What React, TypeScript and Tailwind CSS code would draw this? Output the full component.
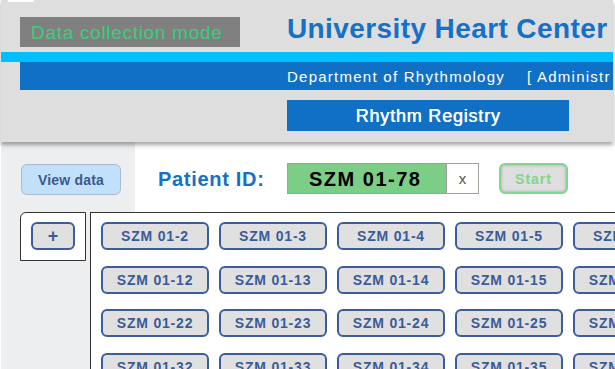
import React from "react";

const font = { fontFamily: '"Liberation Sans", Arial, sans-serif' };

function Tile({ label }: { label: string }) {
  return (
    <button className="h-[28px] w-[108px] shrink-0 rounded-[6px] border-2 border-[#3b5d9c] bg-[#e0e0e0] text-[14px] font-bold tracking-[0.8px] text-[#3b5b98] leading-none">
      {label}
    </button>
  );
}

export default function App() {
  const rows = [0, 1, 2, 3];
  const cols = [0, 1, 2, 3, 4, 5];
  return (
    <div className="relative h-[369px] w-[615px] overflow-hidden bg-white pl-px" style={font}>
      <div className="absolute left-[8px] top-0 z-10 h-[2px] w-[26px] bg-white" />
      {/* Header */}
      <div className="relative z-[5] h-[142px] w-[612px] bg-[#dedede] shadow-[0_3px_4px_rgba(0,0,0,0.35)]">
        <div className="flex h-[52px] items-start pt-[17px]">
          <div className="ml-[19px] flex h-[30px] w-[220px] items-center bg-[#808080] pl-[11px] text-[19px] tracking-[0.7px] text-[#33d17a] leading-none">
            Data collection mode
          </div>
          <div className="ml-[47px] mt-[-2px] whitespace-nowrap text-[28px] font-bold tracking-[0.4px] text-[#1470c8] leading-none">
            University Heart Center
          </div>
        </div>
        <div className="h-[10px] bg-[#00bfff]" />
        <div className="ml-[19px] flex h-[28px] items-center whitespace-nowrap bg-[#0f70c6] pl-[267px] text-[15px] tracking-[1.25px] text-white leading-none">
          <span>Department of Rhythmology</span>
          <span className="ml-[22px]">[ Administr</span>
        </div>
        <div className="ml-[286px] mt-[10px] flex h-[31px] w-[282px] items-center justify-center bg-[#0f70c6] text-[18px] tracking-[0.8px] text-white leading-none [text-shadow:0.5px_0_0_white]">
          Rhythm Registry
        </div>
      </div>

      {/* Top row */}
      <div className="flex h-[70px]">
        <div className="flex w-[134px] items-start bg-[#edeef0] pl-[20px] pt-[22px]">
          <button className="h-[31px] w-[100px] rounded-[6px] border border-[#a9bccf] bg-[#c3e0fb] text-[14px] font-bold tracking-[0.2px] text-[#3b5a8a] leading-none">
            View data
          </button>
        </div>
        <div className="flex flex-1 items-start pt-[21px]">
          <div className="ml-[23px] flex h-[31px] w-[129px] items-center whitespace-nowrap text-[20px] font-bold tracking-[0.7px] text-[#1470c8] leading-none">
            Patient ID:
          </div>
          <div className="flex h-[31px] w-[160px] items-center border border-[#a0a0a0] bg-[#7ccd86] pl-[21px] text-[20px] font-bold tracking-[1.5px] text-black leading-none">
            SZM 01-78
          </div>
          <div className="flex h-[31px] w-[32px] items-center justify-center border border-l-0 border-[#a0a0a0] bg-white text-[15px] text-[#555] leading-none">
            x
          </div>
          <button className="ml-[20px] h-[31px] w-[69px] rounded-[6px] border-2 border-[#84d68e] bg-[#dedede] text-[14px] font-bold tracking-[1px] text-[#82d68c] shadow-[inset_0_0_3px_rgba(0,0,0,0.3)] leading-none">
            Start
          </button>
        </div>
      </div>

      {/* Bottom row */}
      <div className="flex h-[157px]">
        <div className="w-[89px] shrink-0 bg-[#edeef0] pl-[19px]">
          <div className="h-[49px] w-[66px] rounded-tl-[6px] border border-[#333] bg-white pl-[10px] pt-[9px]">
            <button className="flex h-[28px] w-[44px] items-center justify-center rounded-[6px] border-2 border-[#3b5d9c] bg-[#e0e0e0] text-[18px] font-bold text-[#3b5b98] leading-none">
              +
            </button>
          </div>
        </div>
        <div className="flex-1 overflow-hidden border-l border-t border-[#333] pl-[10px] pt-[9px]">
          <div className="flex flex-col gap-y-[15.6px]">
            {rows.map((r) => (
              <div key={r} className="flex gap-x-[10px]">
                {cols.map((c) => (
                  <Tile key={c} label={`SZM 01-${r * 10 + c + 2}`} />
                ))}
              </div>
            ))}
          </div>
        </div>
      </div>
    </div>
  );
}
